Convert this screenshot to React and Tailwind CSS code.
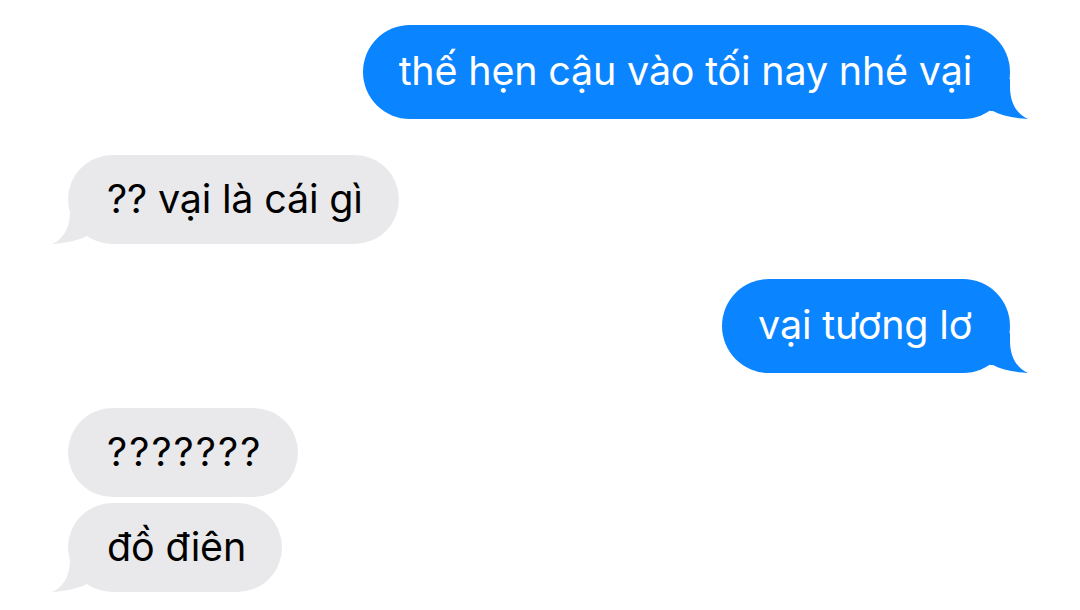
import React from "react";

const font = { fontFamily: "Inter, 'Noto Sans', sans-serif" };

function TailRight({ color }) {
  return (
    <svg
      className="absolute bottom-0 right-[-18px]"
      width="38"
      height="40"
      viewBox="0 0 38 40"
      aria-hidden="true"
    >
      <path d="M0 0 L20 0 L20 8 C20 25 28 36 38 40 C28 39.5 12 37 3 32 L0 32 Z" fill={color} />
    </svg>
  );
}

function TailLeft({ color }) {
  return (
    <svg
      className="absolute bottom-0 left-[-16px]"
      width="38"
      height="40"
      viewBox="0 0 38 40"
      aria-hidden="true"
    >
      <path d="M38 0 L18 0 L18 8 C18 25 10 36 0 40 C10 39.5 26 37 35 32 L38 32 Z" fill={color} />
    </svg>
  );
}

function Sent({ text, tail = true }) {
  return (
    <div className="flex justify-end">
      <div className="relative">
        <div className="relative z-10 h-[94px] rounded-[47px] bg-[#0A84FF] pl-[36px] pr-[38px] flex items-center text-white text-[39.5px] tracking-[-0.2px] whitespace-nowrap">
          {text}
        </div>
        {tail && <TailRight color="#0A84FF" />}
      </div>
    </div>
  );
}

function Received({ text, tail = true, wide = false }) {
  return (
    <div className="flex justify-start">
      <div className="relative">
        <div
          className={
            wide
              ? "relative z-10 h-[89px] rounded-[45px] bg-[#E9E9EB] pl-[39px] pr-[36px] flex items-center text-black text-[39.5px] tracking-[2px] whitespace-nowrap"
              : "relative z-10 h-[89px] rounded-[45px] bg-[#E9E9EB] pl-[39px] pr-[36px] flex items-center text-black text-[39.5px] tracking-[-0.2px] whitespace-nowrap"
          }
        >
          {text}
        </div>
        {tail && <TailLeft color="#E9E9EB" />}
      </div>
    </div>
  );
}

export default function App() {
  return (
    <div className="w-[1080px] h-[610px] bg-white overflow-hidden" style={font}>
      <div className="flex flex-col pl-[68px] pr-[70px] pt-[25px]">
        <Sent text="thế hẹn cậu vào tối nay nhé vại" />
        <div className="h-[36px]" />
        <Received text="?? vại là cái gì" />
        <div className="h-[35px]" />
        <Sent text="vại tương lơ" />
        <div className="h-[35px]" />
        <Received text="???????" tail={false} wide />
        <div className="h-[6px]" />
        <Received text="đồ điên" />
      </div>
    </div>
  );
}
